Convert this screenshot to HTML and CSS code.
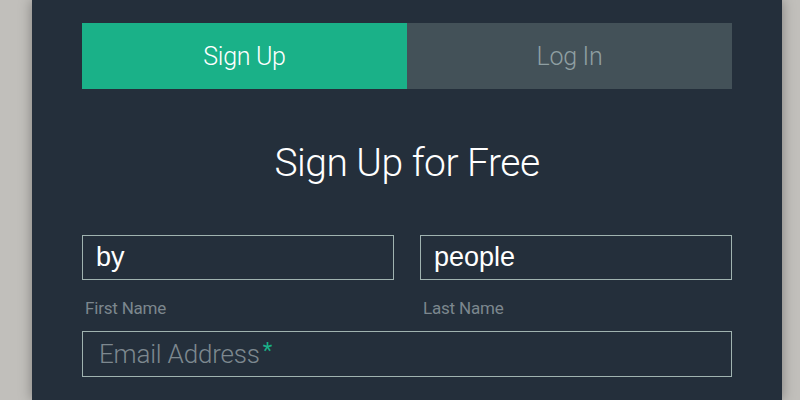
FILE: index.html
```html
<!DOCTYPE html>
<html>
<head>
<meta charset="utf-8">
<link rel="stylesheet" href="styles.css">
</head>
<body>
<div class="card">
  <div class="tabs">
    <div class="tab active">Sign Up</div>
    <div class="tab">Log In</div>
  </div>
  <h1 class="title">Sign Up for Free</h1>
  <div class="row">
    <div class="field">
      <div class="input"><span class="value">by</span></div>
      <div class="label">First Name</div>
    </div>
    <div class="field">
      <div class="input"><span class="value">people</span></div>
      <div class="label">Last Name</div>
    </div>
  </div>
  <div class="input email"><span class="placeholder">Email Address</span><span class="req">*</span></div>
</div>
</body>
</html>
```
FILE: styles.css
```css
html, body {
  margin: 0;
  padding: 0;
}
body {
  background: #c1bfbb;
  height: 400px;
  overflow: hidden;
  font-family: Roboto, "Noto Sans", sans-serif;
}
.card {
  box-sizing: border-box;
  margin-left: 32px;
  width: 750px;
  height: 400px;
  padding: 23px 50px 0;
  background: #242f3b;
  box-shadow: 0 0 12px rgba(0, 0, 0, 0.35);
}
.tabs {
  display: flex;
  height: 66px;
}
.tab {
  flex: 1;
  display: flex;
  align-items: center;
  justify-content: center;
  background: #435158;
  color: #8f9fa2;
  font-size: 25px;
  font-weight: 300;
  letter-spacing: -0.3px;
}
.tab.active {
  background: #1ab188;
  color: #ffffff;
}
.title {
  margin: 50px 0 0;
  height: 96px;
  text-align: center;
  color: #ffffff;
  font-size: 39px;
  font-weight: 300;
  letter-spacing: -0.5px;
  line-height: 48px;
}
.row {
  display: flex;
  gap: 26px;
}
.field {
  flex: 1;
}
.input {
  height: 43px;
  border: 1px solid #a0b3b0;
  display: flex;
  align-items: center;
  padding: 0 13px;
}
.value {
  font-family: "Liberation Sans", Arial, sans-serif;
  font-size: 27px;
  color: #ffffff;
}
.label {
  margin: 18px 0 0 3px;
  height: 33px;
  font-size: 17px;
  line-height: 20px;
  color: #7c878e;
  letter-spacing: -0.2px;
}
.email {
  height: 44px;
  padding-left: 16px;
}
.placeholder {
  font-size: 26px;
  font-weight: 300;
  color: #7d888f;
  letter-spacing: -0.2px;
}
.req {
  color: #1ab188;
  font-size: 22px;
  align-self: flex-start;
  margin-top: 6px;
  margin-left: 3px;
}
```
